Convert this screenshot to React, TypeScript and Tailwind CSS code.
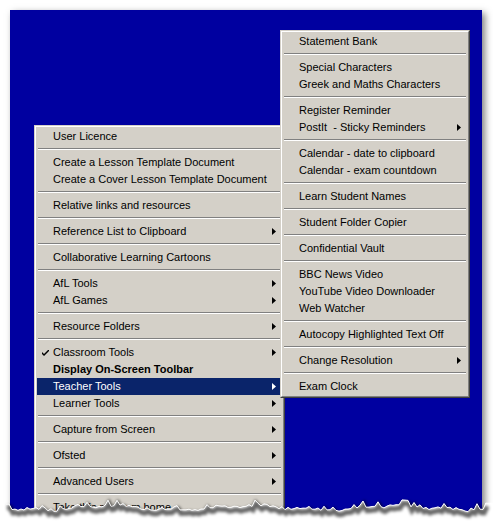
import React from "react";

type Entry =
  | { sep: true }
  | { label: string; arrow?: boolean; bold?: boolean; check?: boolean; active?: boolean };

const leftMenu: Entry[] = [
  { label: "User Licence" },
  { sep: true },
  { label: "Create a Lesson Template Document" },
  { label: "Create a Cover Lesson Template Document" },
  { sep: true },
  { label: "Relative links and resources" },
  { sep: true },
  { label: "Reference List to Clipboard", arrow: true },
  { sep: true },
  { label: "Collaborative Learning Cartoons" },
  { sep: true },
  { label: "AfL Tools", arrow: true },
  { label: "AfL Games", arrow: true },
  { sep: true },
  { label: "Resource Folders", arrow: true },
  { sep: true },
  { label: "Classroom Tools", arrow: true, check: true },
  { label: "Display On-Screen Toolbar", bold: true },
  { label: "Teacher Tools", arrow: true, active: true },
  { label: "Learner Tools", arrow: true },
  { sep: true },
  { label: "Capture from Screen", arrow: true },
  { sep: true },
  { label: "Ofsted", arrow: true },
  { sep: true },
  { label: "Advanced Users", arrow: true },
  { sep: true },
  { label: "Take this program home" },
];

const rightMenu: Entry[] = [
  { label: "Statement Bank" },
  { sep: true },
  { label: "Special Characters" },
  { label: "Greek and Maths Characters" },
  { sep: true },
  { label: "Register Reminder" },
  { label: "PostIt  - Sticky Reminders", arrow: true },
  { sep: true },
  { label: "Calendar - date to clipboard" },
  { label: "Calendar - exam countdown" },
  { sep: true },
  { label: "Learn Student Names" },
  { sep: true },
  { label: "Student Folder Copier" },
  { sep: true },
  { label: "Confidential Vault" },
  { sep: true },
  { label: "BBC News Video" },
  { label: "YouTube Video Downloader" },
  { label: "Web Watcher" },
  { sep: true },
  { label: "Autocopy Highlighted Text Off" },
  { sep: true },
  { label: "Change Resolution", arrow: true },
  { sep: true },
  { label: "Exam Clock" },
];

function Arrow({ white }: { white?: boolean }) {
  return (
    <svg width="4" height="7" viewBox="0 0 4 7" className="block">
      <path d="M0 0 L4 3.5 L0 7 Z" fill={white ? "#ffffff" : "#000000"} />
    </svg>
  );
}

function Check() {
  return (
    <svg width="7" height="7" viewBox="0 0 7 7" className="block">
      <path d="M0 2 L0 4 L2 6 L7 1 L7 -1 L2 4 Z" fill="#000000" />
    </svg>
  );
}

function Menu({ items }: { items: Entry[] }) {
  return (
    <div className="bg-[#d4d0c8] border-t border-l border-t-[#d4d0c8] border-l-[#d4d0c8] border-r border-b border-r-[#404040] border-b-[#404040]">
      <div className="border-t border-l border-t-white border-l-white border-r border-b border-r-[#808080] border-b-[#808080] p-px">
        {items.map((it, i) =>
          "sep" in it ? (
            <div key={i} className="h-[9px] pt-[3px] px-px">
              <div className="h-px bg-[#808080]" />
              <div className="h-px bg-white" />
            </div>
          ) : (
            <div
              key={i}
              className={`flex items-center h-[17px] pr-[6px] whitespace-pre ${
                it.active ? "bg-[#0a246a] text-white" : "text-black"
              } ${it.bold ? "font-bold" : ""}`}
            >
              <div className="w-[16px] shrink-0 flex justify-center pl-[1px] pt-[1px]">
                {it.check && <Check />}
              </div>
              <div className="flex-1">{it.label}</div>
              {it.arrow && <Arrow white={it.active} />}
            </div>
          )
        )}
      </div>
    </div>
  );
}

function TornEdge() {
  // jagged bottom edge, seeded so the shape is stable
  let seed = 11;
  const rand = () => {
    seed = (seed * 16807) % 2147483647;
    return (seed - 1) / 2147483646;
  };
  const pts: [number, number][] = [];
  for (let x = 6; x <= 486; x += 3) {
    const base = 507.5 + Math.sin(x / 23) * 2 + Math.sin(x / 7.3) * 1.2;
    const spike = rand() < 0.12 ? -3 - rand() * 2.5 : 0;
    pts.push([x, base + (rand() - 0.5) * 3 + spike]);
  }
  const line = pts.map(([x, y]) => `${x},${y.toFixed(1)}`).join(" ");
  const shadow = pts.map(([x, y]) => `${x + 1},${(y + 3.5).toFixed(1)}`).join(" ");
  return (
    <svg width="493" height="60" viewBox="0 480 493 60" className="absolute left-0 top-[480px]">
      <defs>
        <filter id="blur" x="-10%" y="-200%" width="120%" height="500%">
          <feGaussianBlur stdDeviation="1.8" />
        </filter>
      </defs>
      <polygon points={`0,${pts[0][1]} ${line} 493,${pts[pts.length - 1][1]} 493,540 0,540`} fill="#ffffff" />
      <polyline points={shadow} fill="none" stroke="rgba(0,0,0,0.6)" strokeWidth="5" filter="url(#blur)" />
      <polyline points={line} fill="none" stroke="#ffffff" strokeWidth="1" />
    </svg>
  );
}

export default function App() {
  return (
    <div
      className="relative w-[493px] h-[529px] bg-white overflow-hidden text-[11px] leading-none"
      style={{ fontFamily: '"Liberation Sans", Arial, sans-serif' }}
    >
      <div className="ml-[10px] mt-[10px] w-[472px] h-[510px] bg-[#0000a0] relative overflow-hidden shadow-[3px_3px_7px_rgba(0,0,0,0.5)]">
        {/* main context menu */}
        <div className="absolute left-[24px] top-[115px] w-[251px]">
          <Menu items={leftMenu} />
        </div>
        {/* Teacher Tools submenu */}
        <div className="absolute left-[270px] top-[20px] w-[190px]">
          <Menu items={rightMenu} />
        </div>
      </div>
      <TornEdge />
    </div>
  );
}
